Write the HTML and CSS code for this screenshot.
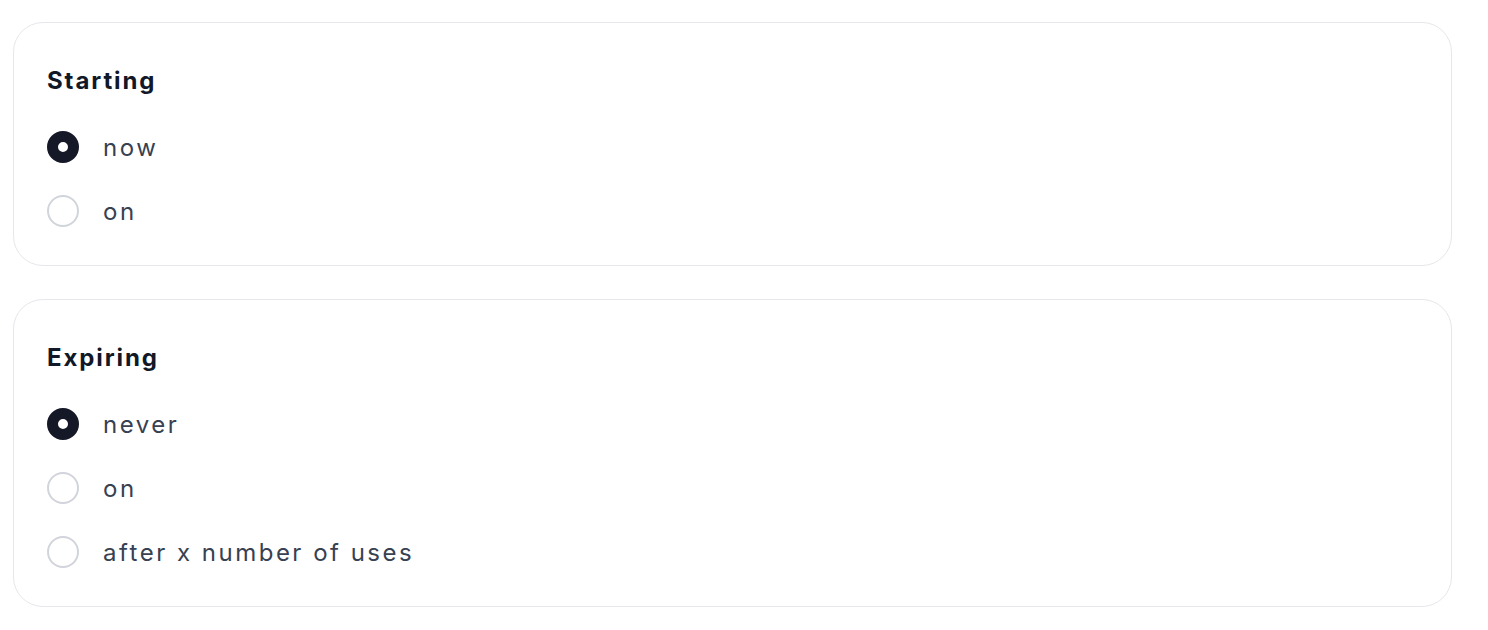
FILE: index.html
```html
<!DOCTYPE html>
<html lang="en">
<head>
    <meta charset="UTF-8">
    <meta name="viewport" content="width=device-width, initial-scale=1.0">
    <title>Schedule</title>
    <link rel="stylesheet" href="styles.css">
</head>
<body>
    <div class="page">
        <fieldset class="card">
            <legend class="card-title">Starting</legend>
            <div class="options">
                <label class="option">
                    <input type="radio" name="starting" value="now" checked>
                    <span>now</span>
                </label>
                <label class="option">
                    <input type="radio" name="starting" value="on">
                    <span>on</span>
                </label>
            </div>
        </fieldset>

        <fieldset class="card">
            <legend class="card-title">Expiring</legend>
            <div class="options">
                <label class="option">
                    <input type="radio" name="expiring" value="never" checked>
                    <span>never</span>
                </label>
                <label class="option">
                    <input type="radio" name="expiring" value="on">
                    <span>on</span>
                </label>
                <label class="option">
                    <input type="radio" name="expiring" value="uses">
                    <span>after x number of uses</span>
                </label>
            </div>
        </fieldset>
    </div>
</body>
</html>
```

FILE: styles.css
```css
body {
    margin: 0;
    background-color: #fff;
    font-family: Inter, "Noto Sans", sans-serif;
    color: #374151;
}
.page {
    width: 1439px;
    padding: 22px 0 0 13px;
    display: flex;
    flex-direction: column;
    gap: 33px;
}
.card {
    margin: 0;
    min-width: 0;
    border: 1px solid #e5e7eb;
    border-radius: 30px;
    padding: 40px 32px 38px 33px;
    display: flex;
    flex-direction: column;
    gap: 32px;
}
.card-title {
    float: left;
    padding: 0;
    margin: 0;
    font-size: 24px;
    line-height: 36px;
    font-weight: 700;
    letter-spacing: 1.9px;
    color: #111827;
}
.options {
    clear: both;
    display: flex;
    flex-direction: column;
    gap: 32px;
}
.option {
    display: flex;
    align-items: center;
    gap: 24px;
    height: 32px;
    font-size: 24px;
    letter-spacing: 2.5px;
    cursor: pointer;
}
.option input {
    appearance: none;
    margin: 0;
    width: 32px;
    height: 32px;
    border: 2px solid #d1d5db;
    border-radius: 50%;
    background-color: #fff;
    flex-shrink: 0;
}
.option input:checked {
    border: 11px solid #151826;
    background-color: #fff;
}
```
